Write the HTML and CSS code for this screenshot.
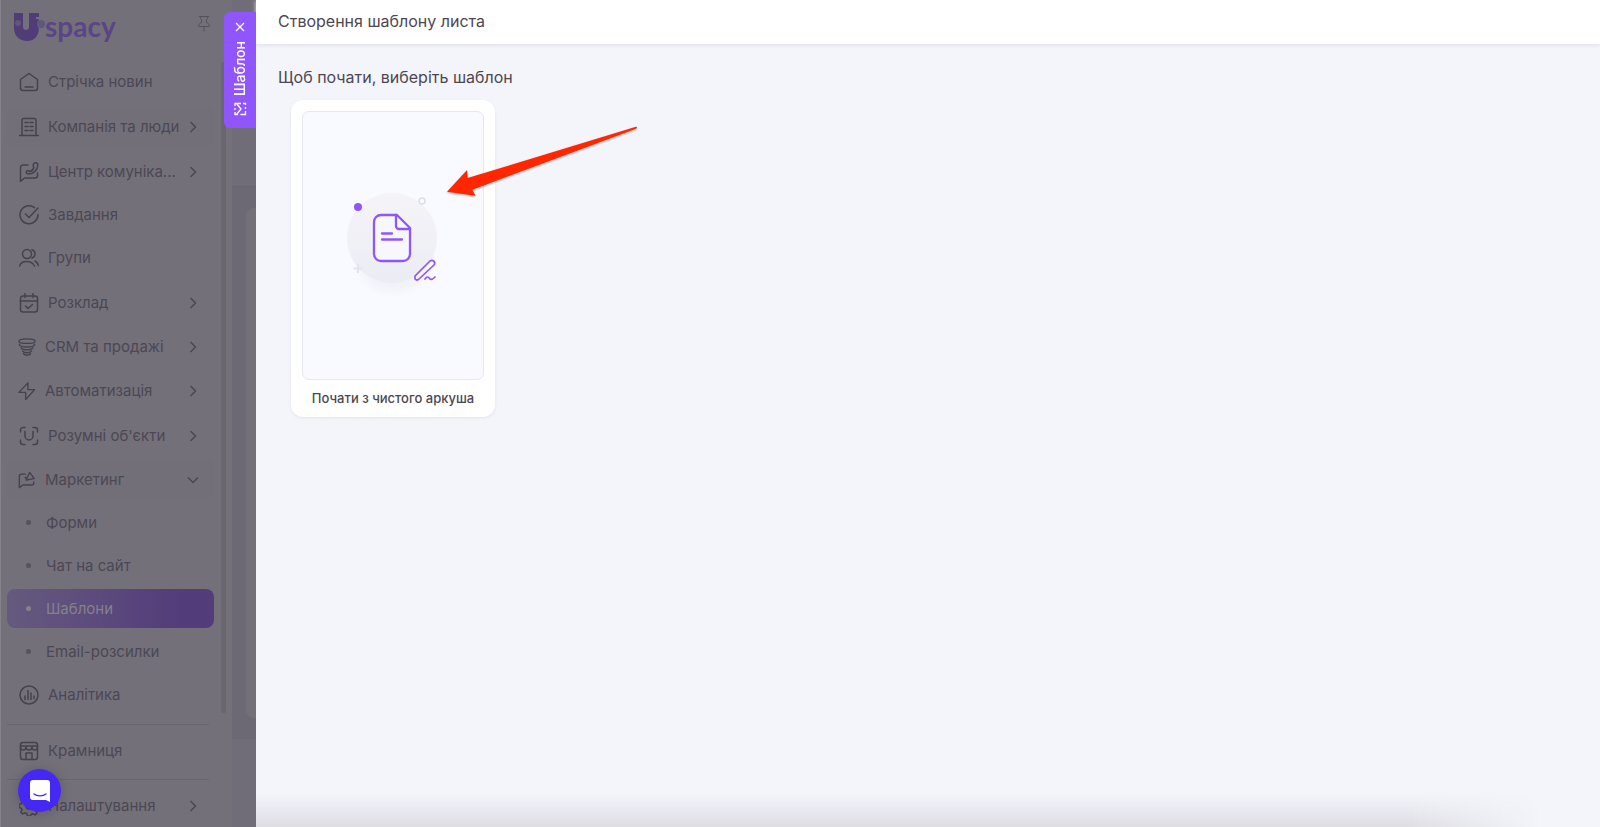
FILE: index.html
```
<!DOCTYPE html>
<html lang="uk">
  <head>
    <meta charset="UTF-8" />
    <meta name="viewport" content="width=device-width, initial-scale=1.0" />
    <title>Uspacy - Створення шаблону листа</title>
    <link rel="stylesheet" href="styles.css">
  </head>
  <body>
    <svg class="sprite" aria-hidden="true">
      <symbol id="chevron" viewBox="0 0 12 12"><path d="M3.500 1l5 5-5 5" /></symbol>
    </svg>

    <div class="app">
      <aside class="sidebar">
        <div class="brand">
          <a class="logo" href="#" aria-label="Uspacy">
            <svg class="logo-mark" viewBox="0 0 31 31">
              <path d="M0 1h9v14c0 4 6 4 6 0V1h10v4h-3v2h3c-2 3-2 7 0 10-1 8-5 12-12 12S0 24 0 16z" />
              <circle cx="27" cy="12" r="4" fill="#62567a" />
              <circle cx="4" cy="11" r="3" fill="#62567a" />
            </svg>
            <span>spacy</span>
          </a>
          <button class="pin" aria-label="Закріпити">
            <svg viewBox="0 0 14 18"><path d="M2 1.500h10M3.500 1.500v2l1 1v3c-2 1-3 2-3 4h11c0-2-1-3-3-4v-3l1-1v-2M7 11.500v5" /></svg>
          </button>
        </div>

        <nav class="menu">
          <a class="item" href="#">
            <svg class="icon" viewBox="0 0 20 20"><path d="M1.500 7.500L10 1.500l8.500 6V16a2.500 2.500 0 0 1-2.500 2.500H4A2.500 2.500 0 0 1 1.500 16zM6 15h8" /></svg>
            <span>Стрічка новин</span>
          </a>
          <a class="item group hovered" href="#">
            <svg class="icon" viewBox="0 0 20 20"><path d="M3 18.500V3a1.500 1.500 0 0 1 1.500-1.500h11A1.500 1.500 0 0 1 17 3v15.500M.5 18.500h19M6 5.500h3M11 5.500h3M6 9.500h3M11 9.500h3M6 13.500h3M11 13.500h3" /></svg>
            <span>Компанія та люди</span>
            <svg class="arrow"><use href="#chevron" /></svg>
          </a>
          <a class="item group" href="#">
            <svg class="icon" viewBox="0 0 20 20"><path d="M9 3H4a2.500 2.500 0 0 0-2.500 2.500v14l4-3.500h10.500a2.500 2.500 0 0 0 2.500-2.500V11M16.500.8c1.500 0 2.300 1 2.300 2.500 0 4.500-4.500 8.700-9 8.700-1.500 0-2.500-.8-2.500-2s1.500-1.800 2.500-1l1 .5c2-.5 3.500-2 4-4l-.5-1.500c-.6-1.500.8-3.200 2.200-3.200z" /></svg>
            <span>Центр комуніка...</span>
            <svg class="arrow"><use href="#chevron" /></svg>
          </a>
          <a class="item" href="#">
            <svg class="icon" viewBox="0 0 20 20"><path d="M15.500 2.600A9 9 0 1 0 19 9.500M6.500 9l3.500 3.500 9-9.500" /></svg>
            <span>Завдання</span>
          </a>
          <a class="item" href="#">
            <svg class="icon" viewBox="0 0 20 20"><circle cx="8" cy="6" r="4.500" /><path d="M.5 18c2-6 12-6 15 0M13 1.800c4 1 4 7 0 8.200M16 13c1.500.8 2.800 2 3.500 4.500" /></svg>
            <span>Групи</span>
          </a>
          <a class="item group" href="#">
            <svg class="icon" viewBox="0 0 20 20"><rect x="1.500" y="3" width="17" height="16" rx="2.500" /><path d="M1.500 8h17M6 .5v4M14 .5v4M6.500 13l2.500 2.500 4.500-4" /></svg>
            <span>Розклад</span>
            <svg class="arrow"><use href="#chevron" /></svg>
          </a>
          <a class="item group compact" href="#">
            <svg class="icon" viewBox="0 0 20 20"><ellipse cx="10" cy="3.500" rx="9" ry="2.500" /><path d="M1.500 7c1 4 16 4 17 0M3.500 11c2 3 11 3 13 0M5 14.500c2 2.500 8 2.500 10 0M6 17.500c2 2 6 2 8 0" /></svg>
            <span>CRM та продажі</span>
            <svg class="arrow"><use href="#chevron" /></svg>
          </a>
          <a class="item group compact" href="#">
            <svg class="icon" viewBox="0 0 20 20"><path d="M11 1L1 11.500h7.500V19.500L18.500 8.500H11z" /></svg>
            <span>Автоматизація</span>
            <svg class="arrow"><use href="#chevron" /></svg>
          </a>
          <a class="item group" href="#">
            <svg class="icon" viewBox="0 0 20 20"><path d="M1.500 6V4A2.500 2.500 0 0 1 4 1.500h2M14 1.500h2A2.500 2.500 0 0 1 18.500 4v2M18.500 14v2a2.500 2.500 0 0 1-2.500 2.500h-2M6 18.500H4A2.500 2.500 0 0 1 1.500 16v-2M6 5.500V10a4 4 0 0 0 8 0V5.500" /></svg>
            <span>Розумні об'єкти</span>
            <svg class="arrow"><use href="#chevron" /></svg>
          </a>
          <a class="item group compact hovered" href="#">
            <svg class="icon" viewBox="0 0 20 20"><path d="M8 3.500H4A2.500 2.500 0 0 0 1.500 6v12.500l4-3h10a2 2 0 0 0 2-2V12M13 1.500l5 7-9 1.500zM8 7l2.500 3" /></svg>
            <span>Маркетинг</span>
            <svg class="arrow open"><use href="#chevron" /></svg>
          </a>
          <a class="item sub" href="#"><span>Форми</span></a>
          <a class="item sub" href="#"><span>Чат на сайт</span></a>
          <a class="item sub active" href="#"><span>Шаблони</span></a>
          <a class="item sub" href="#"><span>Email-розсилки</span></a>
          <a class="item" href="#">
            <svg class="icon" viewBox="0 0 20 20"><circle cx="10" cy="10" r="9" /><path d="M6 11v3.500M9 5.500v9M12 8v6.500M15 11v2.500" /></svg>
            <span>Аналітика</span>
          </a>
        </nav>

        <div class="menu-section">
          <a class="item" href="#">
            <svg class="icon" viewBox="0 0 20 20"><rect x="1.500" y="1.500" width="17" height="17" rx="2.500" /><path d="M1.500 5h17M1.500 6c0 4 5.500 4 5.500 0 0 4 6 4 6 0 0 4 5.500 4 5.500 0M7 18.500V12h6v6.500" /></svg>
            <span>Крамниця</span>
          </a>
        </div>
        <div class="menu-section">
          <a class="item" href="#">
            <svg class="icon" viewBox="0 0 20 20"><circle cx="10" cy="10" r="3" /><path d="M8.500 1h3l.6 2.500 2 .9 2.300-1.300 2 2-1.200 2.300.8 2L20 10v2.500l-2.300.6-.8 1.700 1.100 2.200-1.900 1.900-2.200-1.100-2 .8L11.500 20h-3l-.6-2.400-2-.8-2.200 1.100L1.800 16l1.100-2.200-.8-1.700L0 11.500v-3l2.100-.6.8-2-1.100-2.200 2-2 2.200 1.200 2-.9z" /></svg>
            <span>Налаштування</span>
            <svg class="arrow"><use href="#chevron" /></svg>
          </a>
        </div>
        <div class="scrollbar"></div>
      </aside>

      <div class="backdrop">
        <div class="backdrop-top"></div>
        <div class="backdrop-body"><div class="backdrop-card"></div></div>
      </div>

      <main class="drawer">
        <div class="drawer-tab">
          <button class="tab-close" aria-label="Закрити">
            <svg viewBox="0 0 10 10"><path d="M1 1l8 8M9 1L1 9" /></svg>
          </button>
          <span class="tab-title">Шаблон</span>
          <svg class="tab-icon" viewBox="0 0 14 14"><path d="M4 2H1.500v3M1.500 7.500v5H5M7 12.500h2M11 12.500h1.500V10M12.500 8V2H10M8 2H6M1.500 3.500L7 8l5.500-4.500" /></svg>
        </div>
        <header class="drawer-header">
          <h1>Створення шаблону листа</h1>
        </header>
        <section class="content">
          <h2>Щоб почати, виберіть шаблон</h2>
          <button class="card">
            <span class="preview">
              <svg class="blank" viewBox="0 0 100 110">
                <defs>
                  <linearGradient id="disc" x1="0" y1="0" x2="0" y2="1">
                    <stop offset="0" stop-color="#f4f4f8" />
                    <stop offset="1" stop-color="#ececf5" />
                  </linearGradient>
                  <radialGradient id="glow">
                    <stop offset="0" stop-color="#e6e6f2" />
                    <stop offset="1" stop-color="#e6e6f2" stop-opacity="0" />
                  </radialGradient>
                </defs>
                <ellipse cx="50" cy="76" rx="40" ry="31" fill="url(#glow)" />
                <circle cx="49" cy="47" r="45" fill="url(#disc)" />
                <circle cx="15" cy="16" r="4" fill="#9155fd" />
                <circle cx="79" cy="10" r="3" fill="#f9faff" stroke="#dddde4" stroke-width="1.500" />
                <path d="M15 73v9M10.500 77.500h9" stroke="#e4e4ea" stroke-width="2" />
                <g fill="none" stroke="#9155fd" stroke-width="2.300" stroke-linecap="round" stroke-linejoin="round">
                  <path d="M38 24h16l13 13v26a7 7 0 0 1-7 7H38a7 7 0 0 1-7-7V31a7 7 0 0 1 7-7z" fill="#f7f8fd" />
                  <path d="M53 24v11a3 3 0 0 0 3 3h11M39 42.500h10M39 48.500h20" />
                  <path d="M72 88v-3l15-15c3-2 6 1 4 4L76 88q-2 2-4 0zM82 88c3-4 4-1 5 0s3 0 5-2" stroke-width="1.700" />
                </g>
              </svg>
            </span>
            <span class="card-title">Почати з чистого аркуша</span>
          </button>
        </section>
      </main>

      <svg class="pointer" viewBox="0 0 190 70" aria-hidden="true">
        <path d="M1 65L21 43.500l.5 8L189 .5q2 0 0 2L26 63l3.500 6z" />
      </svg>

      <button class="chat" aria-label="Чат підтримки">
        <svg viewBox="0 0 20 22"><path d="M3 0h14a3 3 0 0 1 3 3v19l-4-2H3a3 3 0 0 1-3-3V3a3 3 0 0 1 3-3z" fill="#fff" /><path d="M4 14c3 2.500 9 2.500 12 0" fill="none" stroke="#4628f5" stroke-width="1.300" stroke-linecap="round" /></svg>
      </button>
    </div>
  </body>
</html>
```
FILE: styles.css
```
* {
  box-sizing: border-box;
}
body {
  margin: 0;
  font-family: Inter, "Noto Sans", sans-serif;
  font-size: 15px;
  color: #4c4753;
  background-color: #73707a;
}
button {
  padding: 0;
  border: none;
  background: none;
  font: inherit;
  color: inherit;
  cursor: pointer;
}
a {
  color: inherit;
  text-decoration: none;
}
.sprite {
  display: none;
}
.app {
  position: relative;
  display: flex;
  height: 100vh;
  overflow: hidden;
}

/* sidebar */
.sidebar {
  position: relative;
  display: flex;
  flex-direction: column;
  width: 232px;
  padding: 0 18px 0 6px;
  border-left: 1px solid #85828b;
  background-color: #73707a;
}
.brand {
  display: flex;
  flex: none;
  justify-content: space-between;
  align-items: flex-start;
  height: 62px;
  padding: 12px 3px 0 7px;
}
.logo {
  display: flex;
  color: #5a4585;
  font-family: Lato, sans-serif;
  font-size: 28px;
  font-weight: 700;
  line-height: 28px;
}
.logo-mark {
  width: 31px;
  height: 31px;
  fill: #503c78;
}
.pin svg {
  display: block;
  width: 14px;
  height: 18px;
  margin-top: 3px;
  fill: none;
  stroke: #55525c;
}
.menu {
  flex: none;
}
.item {
  display: flex;
  align-items: center;
  height: 39px;
  margin-bottom: 4px;
  padding: 0 15px 0 12px;
  border-radius: 8px;
  white-space: nowrap;
}
.group {
  margin-top: 6px;
}
.compact {
  margin-top: 5px;
  padding-left: 11px;
}
.hovered {
  background-color: #726f79;
}
.icon {
  flex: none;
  width: 20px;
  height: 20px;
  margin-right: 9px;
  fill: none;
  stroke: #46414e;
  stroke-width: 1.5;
  stroke-linejoin: round;
  stroke-linecap: round;
}
.compact .icon {
  width: 18px;
  height: 18px;
}
.arrow {
  flex: none;
  width: 12px;
  height: 12px;
  margin-left: auto;
  fill: none;
  stroke: #4c4753;
  stroke-width: 1.5;
}
.open {
  transform: rotate(90deg);
}
.sub {
  gap: 15px;
  padding-left: 19px;
}
.sub::before {
  content: "";
  width: 5px;
  height: 5px;
  border-radius: 50%;
  background-color: #56525e;
}
.active {
  color: #85818c;
  background: linear-gradient(90deg, #655a7e, #533c7a 85%);
}
.active::before {
  background-color: #85818c;
}
.menu-section {
  flex: none;
  margin-right: 5px;
  padding: 6px 0 9px;
  border-top: 1px solid #69666f;
}
.menu + .menu-section {
  margin-top: 6px;
}
.menu-section .item {
  margin: 0 -5px 0 0;
}
.scrollbar {
  position: absolute;
  top: 62px;
  right: 6px;
  width: 5px;
  height: calc(100% - 176px);
  border-radius: 3px;
  background-color: #696670;
}

/* dimmed page behind the drawer */
.backdrop {
  display: flex;
  flex-direction: column;
  width: 24px;
  background-color: #706d78;
}
.backdrop-top {
  height: 187px;
  border-bottom: 1px solid #696670;
}
.backdrop-body {
  height: 552px;
  padding: 21px 0 21px 14px;
  background-color: #6c6974;
}
.backdrop-card {
  height: 100%;
  border-radius: 8px 0 0 8px;
  background-color: #73707a;
}

/* drawer */
.drawer {
  position: relative;
  flex: 1;
  background-color: #f4f5fa;
}
.drawer::after {
  content: "";
  position: absolute;
  right: 60px;
  bottom: 0;
  left: 0;
  height: 34px;
  background: linear-gradient(#dedde200, #e9e9f1 50%, #dedde2);
  mask-image: linear-gradient(90deg, #000 90%, transparent);
  pointer-events: none;
}
.drawer-tab {
  position: absolute;
  top: 12px;
  right: 100%;
  display: flex;
  flex-direction: column;
  align-items: center;
  width: 32px;
  height: 116px;
  padding-top: 10px;
  border-radius: 6px 0 0 6px;
  color: #fff;
  background-color: #9155fd;
}
.drawer-tab svg {
  display: block;
  fill: none;
  stroke: #fff;
  stroke-width: 1.3;
}
.tab-close svg {
  width: 10px;
  height: 10px;
}
.tab-title {
  margin: 9px 0 6px;
  font-size: 14px;
  font-weight: 500;
  line-height: 20px;
  writing-mode: vertical-rl;
  transform: rotate(180deg);
}
.tab-icon {
  width: 14px;
  height: 14px;
  transform: rotate(-90deg);
}
.drawer-header {
  display: flex;
  align-items: center;
  height: 44px;
  padding: 0 22px 2px;
  background-color: #fff;
  box-shadow: 0 1px 4px #dcdce8;
}
h1,
h2 {
  margin: 0;
  font-size: 16px;
  font-weight: 400;
  line-height: 24px;
}
.content {
  padding: 21px 22px;
}
.card {
  display: flex;
  flex-direction: column;
  width: 204px;
  margin: 11px 13px;
  padding: 11px 11px 9px;
  border-radius: 12px;
  background-color: #fff;
  box-shadow: 0 1px 3px #e2e2ee;
}
.preview {
  display: flex;
  justify-content: center;
  align-items: center;
  width: 100%;
  height: 269px;
  border: 1px solid #e8e8f0;
  border-radius: 7px;
  background-color: #f9faff;
}
.blank {
  width: 100px;
  height: 110px;
}
.card-title {
  width: 100%;
  margin-top: 8px;
  font-size: 13px;
  font-weight: 500;
  line-height: 20px;
  text-align: center;
}

/* overlays */
.pointer {
  position: absolute;
  top: 126px;
  left: 446px;
  width: 191px;
  height: 71px;
  fill: #ff2600;
  filter: drop-shadow(0 1px 1px #0005);
}
.chat {
  position: absolute;
  bottom: 15px;
  left: 18px;
  display: flex;
  justify-content: center;
  align-items: center;
  width: 43px;
  height: 43px;
  border-radius: 50%;
  background-color: #4628f5;
  box-shadow: 0 1px 12px #0003;
}
.chat svg {
  width: 20px;
  height: 22px;
}
```
